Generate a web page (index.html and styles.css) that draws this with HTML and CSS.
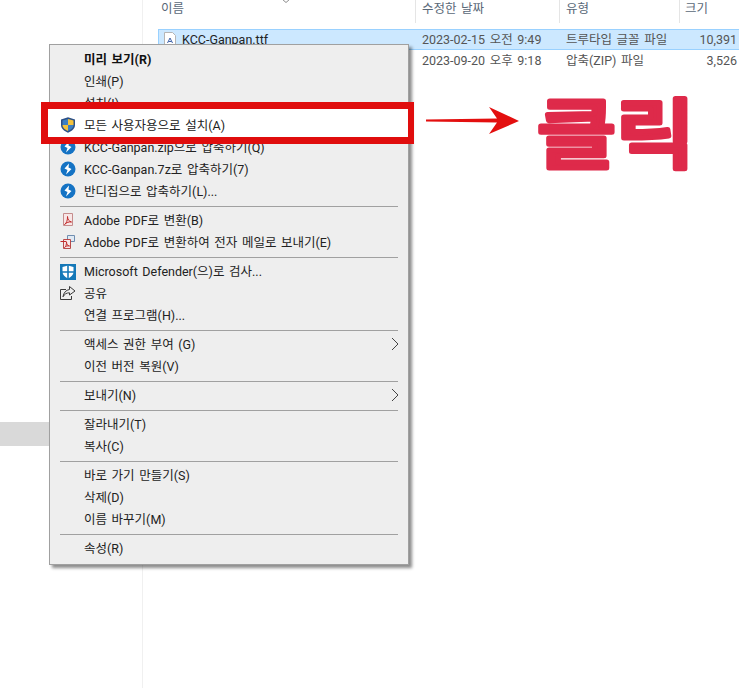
FILE: index.html
```html
<!DOCTYPE html>
<html lang="ko">
<head>
    <meta charset="utf-8">
    <title>글꼴 설치</title>
    <link rel="stylesheet" href="styles.css">
</head>
<body>
    <div class="explorer">
        <div class="nav-pane">
            <div class="nav-item"></div>
        </div>
        <div class="file-pane">
            <svg class="sort-arrow" viewBox="0 0 8 4" fill="none" stroke="#8a8a8a" stroke-width="1">
                <path d="M0 0l4 3.500L8 0"/>
            </svg>
            <div class="file-header">
                <div class="col col-name">이름</div>
                <div class="col col-date">수정한 날짜</div>
                <div class="col col-type">유형</div>
                <div class="col col-size">크기</div>
            </div>
            <div class="file-row selected">
                <div class="col col-name">
                    <svg class="file-icon" viewBox="0 0 16 16">
                        <path d="M2.500 .5h8l3 3v12h-11z" fill="#fff" stroke="#b5b5b5"/>
                        <path d="M5.500 11l2.500-5 2.500 5M6.500 9.500h3" fill="none" stroke="#3f62a8"/>
                    </svg>
                    KCC-Ganpan.ttf
                </div>
                <div class="col col-date">2023-02-15 오전 9:49</div>
                <div class="col col-type">트루타입 글꼴 파일</div>
                <div class="col col-size">10,391</div>
            </div>
            <div class="file-row">
                <div class="col col-name"></div>
                <div class="col col-date">2023-09-20 오후 9:18</div>
                <div class="col col-type">압축(ZIP) 파일</div>
                <div class="col col-size">3,526</div>
            </div>
        </div>
    </div>

    <div class="menu">
        <div class="menu-item"><b>미리 보기(R)</b></div>
        <div class="menu-item">인쇄(P)</div>
        <div class="menu-item">설치(I)</div>
        <div class="menu-item menu-item-marked">
            <svg class="menu-icon" viewBox="0 0 16 16">
                <path d="M8 .3l7 2.200v5.500c0 3.500-3 6-7 7.700-4-1.700-7-4.200-7-7.700V2.500z" fill="#2b4f86"/>
                <path d="M8 2l5.500 1.500V8H8z" fill="#f4c23c"/>
                <path d="M2.500 8H8v6c-2.800-1.300-5.500-3-5.500-6z" fill="#f4c23c"/>
                <path d="M2.500 3.500L8 2v6H2.500z" fill="#3b7fc4"/>
                <path d="M8 8h5.500c0 3-2.700 4.700-5.500 6z" fill="#3b7fc4"/>
            </svg>
            모든 사용자용으로 설치(A)
        </div>
        <div class="menu-item">
            <svg class="menu-icon" viewBox="0 0 16 16">
                <circle cx="8" cy="8" r="7.500" fill="#1573c4"/>
                <path d="M9 2.500L4.500 7.500l3 1.500-1.500 4.500 5.500-5.500-3-1.500z" fill="#fff"/>
            </svg>
            KCC-Ganpan.zip으로 압축하기(Q)
        </div>
        <div class="menu-item">
            <svg class="menu-icon" viewBox="0 0 16 16">
                <circle cx="8" cy="8" r="7.500" fill="#1573c4"/>
                <path d="M9 2.500L4.500 7.500l3 1.500-1.500 4.500 5.500-5.500-3-1.500z" fill="#fff"/>
            </svg>
            KCC-Ganpan.7z로 압축하기(7)
        </div>
        <div class="menu-item">
            <svg class="menu-icon" viewBox="0 0 16 16">
                <circle cx="8" cy="8" r="7.500" fill="#1573c4"/>
                <path d="M9 2.500L4.500 7.500l3 1.500-1.500 4.500 5.500-5.500-3-1.500z" fill="#fff"/>
            </svg>
            반디집으로 압축하기(L)...
        </div>
        <div class="menu-sep"></div>
        <div class="menu-item">
            <svg class="menu-icon" viewBox="0 0 16 16">
                <path d="M3.500 1.500h9v12h-9z" fill="#f8e6e6" stroke="#c58c8c"/>
                <path d="M4.500 12.500c2-1 3.200-4.500 3-8 .2 3 1.500 5 4 5.500-2.500-.5-5 .5-7 2.500z" fill="none" stroke="#c22a2a"/>
            </svg>
            Adobe PDF로 변환(B)
        </div>
        <div class="menu-item">
            <svg class="menu-icon" viewBox="0 0 16 16">
                <path d="M7.500 1.500h7v6h-7z" fill="#dfe9f3" stroke="#6f8db0"/>
                <path d="M3.500 5.500h7v9h-7z" fill="#f8e6e6" stroke="#b84a4a"/>
                <path d="M.5 7.500h6" stroke="#c22a2a" fill="none"/>
                <path d="M4.500 13.500c1.500-1 2-3 2-5.500 0 2 1 3.500 3 4-2-.5-3.500 0-5 1.500z" fill="none" stroke="#c22a2a"/>
            </svg>
            Adobe PDF로 변환하여 전자 메일로 보내기(E)
        </div>
        <div class="menu-sep"></div>
        <div class="menu-item">
            <svg class="menu-icon menu-icon-low" viewBox="0 0 16 16">
                <rect width="16" height="16" fill="#1478b8"/>
                <path d="M8 1.500l5.500 1.500v5c0 3-2.500 5-5.500 6.500-3-1.500-5.500-3.500-5.500-6.500V3z" fill="#fff"/>
                <path d="M7.200 1h1.600v14H7.200zM2 7.200h12v1.600H2z" fill="#1478b8"/>
            </svg>
            Microsoft Defender(으)로 검사...
        </div>
        <div class="menu-item">
            <svg class="menu-icon" viewBox="0 0 16 16" fill="none" stroke="#3a3a3a">
                <path d="M6 4.500H.5v10h11V11"/>
                <path d="M9.500 1.500l5.500 4.500-5.500 4V7.800c-3 0-5 1.200-6.500 4 .5-4 3-6.800 6.500-7.300z" fill="#eee"/>
            </svg>
            공유
        </div>
        <div class="menu-item">연결 프로그램(H)...</div>
        <div class="menu-sep"></div>
        <div class="menu-item">
            액세스 권한 부여 (G)
            <svg class="submenu-arrow" viewBox="0 0 8 14" fill="none" stroke="#444">
                <path d="M1 1l6 6-6 6"/>
            </svg>
        </div>
        <div class="menu-item">이전 버전 복원(V)</div>
        <div class="menu-sep"></div>
        <div class="menu-item">
            보내기(N)
            <svg class="submenu-arrow" viewBox="0 0 8 14" fill="none" stroke="#444">
                <path d="M1 1l6 6-6 6"/>
            </svg>
        </div>
        <div class="menu-sep"></div>
        <div class="menu-item">잘라내기(T)</div>
        <div class="menu-item">복사(C)</div>
        <div class="menu-sep"></div>
        <div class="menu-item">바로 가기 만들기(S)</div>
        <div class="menu-item">삭제(D)</div>
        <div class="menu-item">이름 바꾸기(M)</div>
        <div class="menu-sep"></div>
        <div class="menu-item">속성(R)</div>
    </div>

    <div class="highlight-box"></div>
    <svg class="red-arrow" viewBox="0 0 94 27">
        <path d="M0 12.500L71 11.500 63 0l30 14L63 27l8-11.500L0 14.500z" fill="#e30f0f"/>
    </svg>
    <svg class="click-label" viewBox="0 0 190 110">
        <text x="0" y="0" transform="translate(2 82) scale(1.13 1)">클릭</text>
    </svg>
</body>
</html>
```

FILE: styles.css
```css
* {
    margin: 0;
    padding: 0;
    box-sizing: border-box;
}

body {
    font-family: Roboto, "Noto Sans CJK KR", sans-serif;
    font-size: 12.5px;
    word-spacing: 1.5px;
    background: white;
    color: #1a1a1a;
    width: 739px;
    height: 688px;
    overflow: hidden;
    position: relative;
}

.explorer {
    display: flex;
    height: 688px;
}

.nav-pane {
    width: 143px;
    flex-shrink: 0;
    padding-top: 422px;
    border-right: 1px solid #f0f0f0;
}

.nav-item {
    height: 24px;
    background: #d9d9d9;
}

.file-pane {
    flex: 1;
    position: relative;
    padding-left: 15px;
    min-width: 0;
}

.sort-arrow {
    position: absolute;
    left: 139px;
    top: -1px;
    width: 8px;
    height: 4px;
}

.file-header {
    display: flex;
    height: 23px;
    margin-bottom: 6px;
}

.file-header .col {
    border-right: 1px solid #e5e5e5;
    line-height: 18px;
    color: #5a6878;
}

.file-header .col-name {
    padding-left: 3px;
}

.file-header .col-date,
.file-header .col-type {
    padding-left: 6px;
}

.file-header .col-size {
    padding-left: 5px;
    border-right: none;
}

.file-row {
    display: flex;
    height: 21px;
    line-height: 20px;
    color: #555;
    border: 1px solid transparent;
    margin-right: -1px;
}

.file-row.selected {
    background: #cce8ff;
    border-color: #99d1ff;
}

.col {
    padding-left: 5px;
    flex-shrink: 0;
    white-space: nowrap;
}

.col-name {
    width: 258px;
}

.file-row .col-name {
    color: #222;
    display: flex;
    align-items: center;
    gap: 4px;
    padding-left: 3px;
}

.col-date {
    width: 144px;
}

.col-type {
    width: 120px;
}

.col-size {
    width: 58px;
    padding: 0 2px 0 0;
}

.file-row .col-size {
    text-align: right;
}

.file-icon {
    width: 16px;
    height: 16px;
}

.menu {
    position: absolute;
    left: 49px;
    top: 44px;
    width: 360px;
    height: 521px;
    padding: 3px;
    background: #eeeeee;
    border: 1px solid #a0a0a0;
    box-shadow: 3px 3px 3px rgba(0, 0, 0, 0.45);
}

.menu-item {
    height: 22px;
    line-height: 24px;
    padding-left: 31px;
    position: relative;
    white-space: nowrap;
    color: #222;
}

.menu-item b {
    color: #111;
}

.menu-item-marked {
    z-index: 2;
}

.menu-icon {
    position: absolute;
    left: 7px;
    top: 3px;
    width: 16px;
    height: 16px;
}

.menu-icon-low {
    top: 4px;
}

.submenu-arrow {
    position: absolute;
    right: 6px;
    top: 4px;
    width: 8px;
    height: 14px;
}

.menu-sep {
    height: 1px;
    margin: 4px 7px 2px 7px;
    background: #a0a0a0;
}

/* sits over the menu, only the marked row stays on top of it */
.highlight-box {
    position: absolute;
    left: 41px;
    top: 102px;
    width: 373px;
    height: 42px;
    border: 7px solid #e00d0d;
    border-right-width: 6px;
    background: white;
    z-index: 1;
}

.red-arrow {
    position: absolute;
    left: 426px;
    top: 107px;
    width: 94px;
    height: 27px;
}

.click-label {
    position: absolute;
    left: 535px;
    top: 80px;
    width: 190px;
    height: 110px;
}

.click-label text {
    font-family: "Noto Sans CJK KR", sans-serif;
    font-size: 76px;
    font-weight: 500;
    word-spacing: 0;
    fill: #de2a4a;
    stroke: #de2a4a;
    stroke-width: 5px;
    stroke-linejoin: round;
}
```
